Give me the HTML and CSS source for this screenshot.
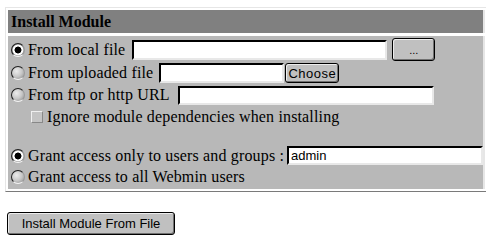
FILE: index.html
```html
<!DOCTYPE html>
<html>
<head>
<meta charset="UTF-8">
<title>Install Module</title>
<link rel="stylesheet" href="styles.css">
</head>
<body>
	<form class="install">
		<div class="frame">
			<div class="head">Install Module</div>
			<div class="panel">
				<div class="row row-local">
					<label class="opt"><input type="radio" name="source" checked> From local file</label>
					<input type="text" class="field f-local">
					<button type="button" class="btn btn-dots">...</button>
				</div>
				<div class="row row-upload">
					<label class="opt"><input type="radio" name="source"> From uploaded file</label>
					<input type="text" class="field f-upload">
					<button type="button" class="btn btn-choose">Choose</button>
				</div>
				<div class="row row-url">
					<label class="opt"><input type="radio" name="source"> From ftp or http URL</label>
					<input type="text" class="field f-url">
				</div>
				<div class="row row-check">
					<label class="opt"><input type="checkbox"> Ignore module dependencies when installing</label>
				</div>
				<div class="spacer"></div>
				<div class="row row-grant">
					<label class="opt"><input type="radio" name="grant" checked> Grant access only to users and groups :</label>
					<input type="text" class="field f-users" value="admin">
				</div>
				<div class="row row-all">
					<label class="opt"><input type="radio" name="grant"> Grant access to all Webmin users</label>
				</div>
			</div>
		</div>
		<button type="button" class="btn btn-submit">Install Module From File</button>
	</form>
</body>
</html>
```
FILE: styles.css
```css
/* page */
body {
	margin: 7px 12px 0 5px;
	background-color: #ffffff;
	font-family: "Liberation Serif", "Times New Roman", serif;
	font-size: 16px;
	color: #000000;
}

/* outer table frame */
.frame {
	width: 477px;
	padding: 2px;
	border: 1px solid;
	border-color: #e6e6e6 #7a7a7a #7a7a7a #e6e6e6;
}

.head {
	height: 23px;
	line-height: 23px;
	padding-left: 3px;
	background-color: #808080;
	font-weight: bold;
	border-right: 2px solid #e6e6e6;
}

.panel {
	margin-top: 3px;
	padding: 1px 0 2px 3px;
	background-color: #b8b8b8;
	border-right: 2px solid #e6e6e6;
}

/* rows */
.row {
	display: flex;
	align-items: center;
	height: 22px;
	white-space: nowrap;
}

.row-local { height: 25px; }
.row-check { height: 21px; padding-left: 20px; }
.spacer { height: 18px; }
.row-grant { height: 21px; }
.row-all { height: 21px; }

.opt {
	display: flex;
	align-items: center;
	letter-spacing: 0.15px;
}

/* radio / checkbox */
.opt input[type=radio] {
	appearance: none;
	-webkit-appearance: none;
	width: 14px;
	height: 14px;
	margin: 0 3px 0 0;
	border: 1px solid;
	border-color: #202020 #9a9a9a #f4f4f4 #202020;
	border-radius: 50%;
	background: radial-gradient(circle at 38% 35%, #ececec 0%, #c8c8c8 50%, #888888 100%);
}

.opt input[type=radio]:checked {
	background: radial-gradient(circle, #000000 0%, #000000 38%, #ffffff 44%, #ffffff 58%, #9a9a9a 68%, #6a6a6a 100%);
}

.opt input[type=checkbox] {
	appearance: none;
	-webkit-appearance: none;
	width: 12px;
	height: 12px;
	margin: 0 4px 0 0;
	border: 1px solid;
	border-color: #f0f0f0 #888888 #888888 #f0f0f0;
	background-color: #c4c4c4;
}

/* text fields */
.field {
	box-sizing: border-box;
	height: 20px;
	margin: 0 0 0 4px;
	padding: 0 2px;
	border: 2px solid;
	border-color: #000000 #e8e8e8 #e8e8e8 #000000;
	background-color: #ffffff;
	font-family: "Liberation Sans", Arial, sans-serif;
	font-size: 13px;
}

.f-local { width: 255px; margin-left: 7px; }
.f-upload { width: 125px; margin-left: 6px; }
.f-url { width: 256px; height: 19px; margin-left: 8px; }
.f-users { width: 196px; height: 19px; margin-left: 3px; }

/* buttons */
.btn {
	box-sizing: border-box;
	padding: 0;
	background-color: #c0c0c0;
	border: 1px solid #000000;
	border-radius: 3px;
	box-shadow: inset 1px 1px 0 #ececec, inset -1px -1px 0 #707070;
	font-family: "Liberation Sans", Arial, sans-serif;
	font-size: 13px;
	color: #000000;
}

.btn-dots {
	width: 43px;
	height: 23px;
	margin-left: 5px;
	font-size: 11px;
}

.btn-choose {
	width: 54px;
	height: 20px;
	margin-left: 1px;
	letter-spacing: 0.5px;
}

.btn-submit {
	display: block;
	width: 168px;
	height: 23px;
	margin: 20px 0 0 2px;
}
```
